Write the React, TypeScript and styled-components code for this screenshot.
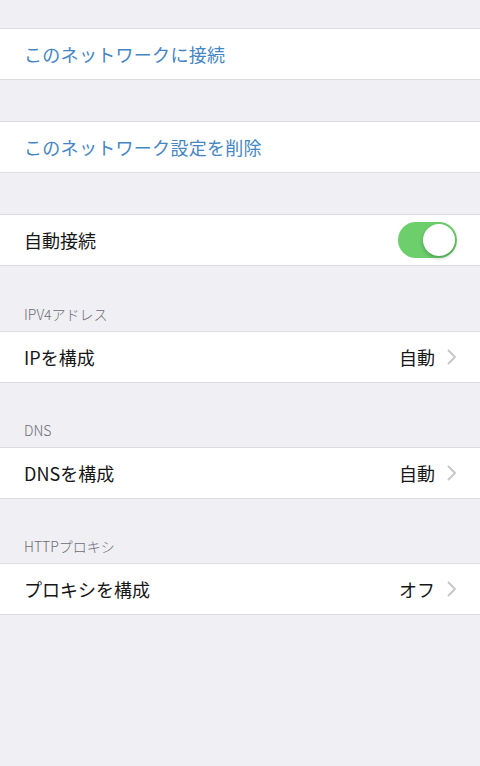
import styled, { createGlobalStyle } from "styled-components";

const Global = createGlobalStyle`
  html, body {
    margin: 0;
    padding: 0;
    background: #efeff4;
  }
  body {
    font-family: "Noto Sans CJK JP", "Liberation Sans", sans-serif;
    -webkit-font-smoothing: antialiased;
  }
`;

interface Row {
  label: string;
  value: string;
}

const configRows: { header: string; row: Row }[] = [
  { header: "IPV4アドレス", row: { label: "IPを構成", value: "自動" } },
  { header: "DNS", row: { label: "DNSを構成", value: "自動" } },
  { header: "HTTPプロキシ", row: { label: "プロキシを構成", value: "オフ" } },
];

function Chevron() {
  return (
    <St.Chevron width="10" height="16" viewBox="0 0 10 16">
      <path d="M1.5 1.5 L8 8 L1.5 14.5" fill="none" stroke="#c7c7cc" strokeWidth="2" strokeLinecap="round" strokeLinejoin="round" />
    </St.Chevron>
  );
}

export default function App() {
  return (
    <St.Page>
      <Global />
      <St.Spacer $h={28} />
      <St.Group>
        <St.Cell>
          <St.Action>このネットワークに接続</St.Action>
        </St.Cell>
      </St.Group>
      <St.Spacer $h={41} />
      <St.Group>
        <St.Cell>
          <St.Action>このネットワーク設定を削除</St.Action>
        </St.Cell>
      </St.Group>
      <St.Spacer $h={41} />
      <St.Group>
        <St.Cell>
          <St.Label>自動接続</St.Label>
          <St.Switch>
            <St.Knob />
          </St.Switch>
        </St.Cell>
      </St.Group>
      {configRows.map(({ header, row }) => (
        <St.Section key={header}>
          <St.Header>{header}</St.Header>
          <St.Group>
            <St.Cell>
              <St.Label>{row.label}</St.Label>
              <St.Detail>
                <St.Value>{row.value}</St.Value>
                <Chevron />
              </St.Detail>
            </St.Cell>
          </St.Group>
        </St.Section>
      ))}
    </St.Page>
  );
}

const St = {
  Page: styled.main`
    width: 480px;
    min-height: 766px;
    background: #efeff4;
  `,
  Spacer: styled.div<{ $h: number }>`
    height: ${(p) => p.$h}px;
  `,
  Section: styled.section`
    &:first-of-type {
      padding-top: 1px;
    }
  `,
  Group: styled.div`
    background: #fff;
    border-top: 1px solid #dcdce0;
    border-bottom: 1px solid #dcdce0;
  `,
  Cell: styled.div`
    height: 50px;
    display: flex;
    align-items: center;
    justify-content: space-between;
    padding: 0 23px 0 24px;
  `,
  Action: styled.span`
    font-size: 18px;
    letter-spacing: 0.3px;
    color: #4586c4;
  `,
  Label: styled.span`
    font-size: 18px;
    color: #161616;
  `,
  Header: styled.h2`
    margin: 0;
    height: 64px;
    box-sizing: border-box;
    padding: 0 24px 7px;
    display: flex;
    align-items: flex-end;
    font-size: 14px;
    font-weight: 300;
    color: #6d6d72;
  `,
  Detail: styled.div`
    display: flex;
    align-items: center;
    gap: 12px;
  `,
  Value: styled.span`
    font-size: 18px;
    color: #161616;
  `,
  Chevron: styled.svg`
    display: block;
  `,
  Switch: styled.div`
    width: 59px;
    height: 36px;
    border-radius: 18px;
    background: #6ccf6c;
    display: flex;
    align-items: center;
    justify-content: flex-end;
    padding: 2px;
    box-sizing: border-box;
  `,
  Knob: styled.div`
    width: 32px;
    height: 32px;
    border-radius: 50%;
    background: #fff;
    box-shadow: 0 2px 4px rgba(0, 0, 0, 0.25);
  `,
};
